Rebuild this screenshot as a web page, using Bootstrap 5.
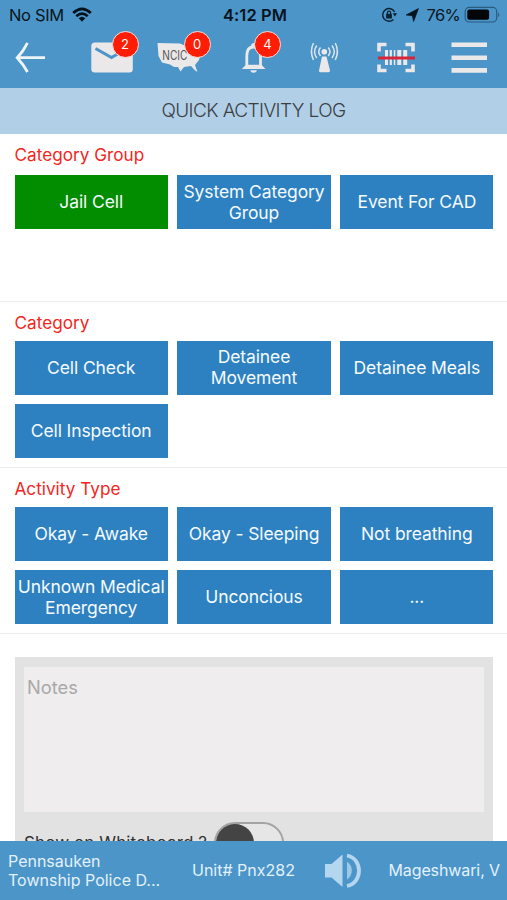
<!DOCTYPE html>
<html lang="en">
<head>
<meta charset="utf-8">
<meta name="viewport" content="width=device-width, initial-scale=1">
<title>Quick Activity Log</title>
<link href="https://cdn.jsdelivr.net/npm/bootstrap@5.3.0/dist/css/bootstrap.min.css" rel="stylesheet">
<style>
body{font-family:Inter,"Liberation Sans",sans-serif;color:#111;background:#fff}
.app{width:507px;height:900px}
.bar-blue{background:#4b95c9}
.status{height:30px;padding:0 6px 0 9px;font-size:16.5px;line-height:30px;color:#0a1620;display:grid;grid-template-columns:1fr auto 1fr}
.lbl-sim{letter-spacing:-.35px}
.pct{letter-spacing:-.7px}
.status .clock{font-weight:600;color:#07131d;letter-spacing:.1px}
.tools{height:58px;display:grid;grid-template-columns:91px 66px 83px 68px 67px 74px 58px}
.tool{border:0;padding:0;background:none;position:relative}
.tool svg{display:block}
.count{position:absolute;top:.5px;width:27px;height:27px;border:1.5px solid #f4e4e4;border-radius:50%;background:#ff1d05;color:#fff;font-size:13px;line-height:24px;text-align:center;font-weight:400}
.heading{height:46px;background:#b1cfe7;font-size:19px;line-height:46px;color:#3b4043;font-weight:300;letter-spacing:-.6px}
.block{padding:9px 13.5px 0 14.5px;border-bottom:1px solid #ececec}
.b1{height:168px}.b2,.b3{height:166px}
.block h2{font-size:17.2px;line-height:24px;height:24px;margin:0 0 8px;color:#f22623;font-weight:400;letter-spacing:0}
.b2 h2,.b3 h2{margin-bottom:5.500px}
.tiles{display:grid;grid-template-columns:repeat(3,1fr);gap:9.5px}
.tile{height:54px;background:#2e81c0;color:#f5faff;border:0;border-radius:0;padding:0 0 1px;font-size:17.5px;letter-spacing:-.1px;line-height:21px;white-space:nowrap}
.tile:hover{background:#2672ae;color:#fff}
.tile.on{background:#028c00}
.panel{margin:23px 14px 0 15px;padding:10px 9px 0;background:#e2e2e2}
.notes{height:145px;background:#efedee;border:0;border-radius:0;padding:7px 3px;font-size:18.3px;line-height:27px;resize:none}
.notes::placeholder{color:#aaa8a9;opacity:1}
.notes:focus{background:#efedee;box-shadow:none}
.board{height:28px;padding-top:10px;font-size:17px;color:#333}
.board label{line-height:42px;height:42px;width:190px;letter-spacing:.1px}
.switcher{width:70px;height:42px;border:2px solid #a3a3a3;border-radius:21px;background:#e6e6e6;flex:none}
.switcher i{display:block;width:38px;height:38px;border-radius:50%;background:#444}
.foot{height:59px;font-size:16px;line-height:19px;color:#e3f1fb;display:grid;grid-template-columns:192px 128px 62px 125px;align-items:center}
</style>
</head>
<body>
<main class="app d-flex flex-column overflow-hidden">
<header class="bar-blue flex-shrink-0">
  <div class="status">
    <div class="d-flex align-items-center"><span class="lbl-sim">No SIM</span>
      <svg class="ms-2" width="20" height="16" viewBox="0 0 20 16" fill="none" stroke="#05111b" stroke-width="2.7"><path d="M1.2 6.1Q10-2.2 18.8 6.1M4.3 9.2Q10 3.9 15.7 9.2"/><path d="M6.7 11.3Q10 8.3 13.3 11.3L10 14.8Z" fill="#05111b" stroke="none"/></svg></div>
    <div class="clock">4:12 PM</div>
    <div class="d-flex align-items-center justify-content-end">
      <svg width="38" height="18" viewBox="380 6 38 18"><path d="M393.6 12A6.3 6.3 0 1 0 392.4 19.4" fill="none" stroke="#0b2233" stroke-width="1.4"/><path d="M391.7 13.2h4.4l-2.2 3.2z" fill="#0b2233"/><rect x="385.1" y="13.8" width="5.8" height="4.7" rx=".6" fill="#0b2233"/><path d="M386.4 14v-1.3a1.6 1.6 0 0 1 3.2 0v1.3" fill="none" stroke="#0b2233" stroke-width="1.2"/><path d="M417.500 8.500L412.600 21.500 411.300 15.700 405 15Z" fill="#07131d" stroke="#07131d" stroke-width=".6"/></svg>
      <span class="pct ms-2">76%</span>
      <svg class="ms-1" width="37" height="18" viewBox="463 6 37 18"><rect x="464.2" y="7.4" width="31.5" height="14.6" rx="4" fill="none" stroke="#285c80" stroke-width="1.2"/><rect x="466.3" y="9.6" width="21.8" height="10.2" rx="2" fill="#020609"/><path d="M497.2 12.2q2.3 2.3 0 5z" fill="#285c80"/></svg>
    </div>
  </div>
  <nav class="tools">
    <button class="tool" aria-label="Back"><svg width="91" height="58" viewBox="0 30 91 58" fill="none" stroke="#edf4fa" stroke-width="2.8"><path d="M45 57.700H18M27.500 42.800Q23.500 51 17.200 57.700Q23.500 64.500 27.500 72"/></svg></button>
    <button class="tool" aria-label="Mail"><svg width="66" height="58" viewBox="91 30 66 58"><rect x="91.300" y="42.500" width="41.500" height="30" rx="3.500" fill="#ebe8ea"/><path d="M95.500 48.500L111.500 57.500L121 52" fill="none" stroke="#4b95c9" stroke-width="3"/></svg><span class="count" style="left:20.500px">2</span></button>
    <button class="tool" aria-label="NCIC"><svg width="83" height="58" viewBox="157 30 83 58"><path d="M157.500 43L180 43.500L186 46H204L200.500 54.500L199 60L195 65L197.500 72L194.500 70L191 66L184 67L180.500 71.500L178 67H174L170 64.500L162 62.500L158.500 56Z" fill="#ebe8ea"/><text x="162.300" y="59.600" font-family="Inter,sans-serif" font-size="12.500" textLength="25" lengthAdjust="spacingAndGlyphs" fill="#5a5556">NCIC</text></svg><span class="count" style="left:26.500px">0</span></button>
    <button class="tool" aria-label="Alerts"><svg width="68" height="58" viewBox="240 30 68 58"><path d="M246.800 67V55.500Q246.800 47 253.600 47Q260.500 47 260.500 55.500V67" fill="none" stroke="#ebe8ea" stroke-width="2.800"/><path d="M251.200 46.500V44.500Q253.600 41.500 256 44.500V46.500M241.800 69L246 64.700H261.500L265.500 69ZM250.300 70.200H257Q256.500 72.700 253.600 72.700Q250.800 72.700 250.300 70.200Z" fill="#ebe8ea"/></svg><span class="count" style="left:14px">4</span></button>
    <button class="tool" aria-label="Radio"><svg width="67" height="58" viewBox="308 30 67 58"><circle cx="324.300" cy="51.700" r="2.800" fill="#ebe8ea"/><path d="M322 56.500H326.500L330 70.500Q330 72.300 328.500 72.300H320.500Q318.700 72.300 319 70.500Z" fill="#ebe8ea"/><g fill="none" stroke="#dce5ec" stroke-width="1.500"><path d="M320.500 47.500Q317 51.500 320.500 56M328.200 47.500Q331.700 51.500 328.200 56M316.800 45.500Q312.300 51.500 316.800 58M332 45.500Q336.500 51.500 332 58M313.500 43Q309.300 51.500 313.500 60M335.300 43Q339.500 51.500 335.300 60"/></g></svg></button>
    <button class="tool" aria-label="Scan barcode"><svg width="74" height="58" viewBox="375 30 74 58"><path d="M379 51.500V44.500H386.500M405.500 44.500H413V51.500M379 64.500V70.500H386.500M405.500 70.500H413V64.500" fill="none" stroke="#ebe8ea" stroke-width="3.600"/><path d="M385 50h3v15h-3zM389.700 50h2.200v15h-2.200zM393.800 50h1.500v15h-1.500zM397.300 50h4v15h-4zM403.200 50h4v15h-4z" fill="#ebe8ea"/><path d="M378 58H415" stroke="#d82638" stroke-width="2.800"/></svg></button>
    <button class="tool" aria-label="Menu"><svg width="58" height="58" viewBox="449 30 58 58" stroke="#ebe8ea" stroke-width="4.600"><path d="M451.500 44.700H487M451.500 57.700H487M451.500 70.400H487"/></svg></button>
  </nav>
</header>
<h1 class="heading text-center m-0 flex-shrink-0"><span class="title">QUICK ACTIVITY LOG</span></h1>
<section class="block b1 flex-shrink-0"><h2>Category Group</h2>
  <div class="tiles"><button class="btn tile on">Jail Cell</button><button class="btn tile">System Category<br>Group</button><button class="btn tile">Event For CAD</button></div></section>
<section class="block b2 flex-shrink-0"><h2>Category</h2>
  <div class="tiles"><button class="btn tile">Cell Check</button><button class="btn tile">Detainee<br>Movement</button><button class="btn tile">Detainee Meals</button><button class="btn tile">Cell Inspection</button></div></section>
<section class="block b3 flex-shrink-0"><h2>Activity Type</h2>
  <div class="tiles"><button class="btn tile">Okay - Awake</button><button class="btn tile">Okay - Sleeping</button><button class="btn tile">Not breathing</button><button class="btn tile">Unknown Medical<br>Emergency</button><button class="btn tile">Unconcious</button><button class="btn tile">...</button></div></section>
<section class="panel flex-grow-1 overflow-hidden">
  <textarea class="form-control notes" placeholder="Notes"></textarea>
  <div class="board d-flex"><label>Show on Whiteboard ?</label><span class="switcher" role="switch" aria-checked="false"><i></i></span></div>
</section>
<footer class="foot bar-blue flex-shrink-0">
  <div class="ps-2">Pennsauken<br>Township Police D...</div>
  <div>Unit# Pnx282</div>
  <svg width="62" height="59" viewBox="320 841 62 59"><path d="M325 864H331.500L342.500 854.500V887L331.500 877.500H325Z" fill="#b5d6ef"/><path d="M347 861.500Q351.800 865 351.800 870.500Q351.800 876 347 879.500Z" fill="#9dc8e8"/><path d="M347 855.500C363 858.500 363 883 347 886" fill="none" stroke="#b5d6ef" stroke-width="3.800"/></svg>
  <div class="text-end" style="padding-right:7px;letter-spacing:-.1px">Mageshwari, V</div>
</footer>
</main>
<script src="https://cdn.jsdelivr.net/npm/bootstrap@5.3.0/dist/js/bootstrap.bundle.min.js"></script>
</body>
</html>
